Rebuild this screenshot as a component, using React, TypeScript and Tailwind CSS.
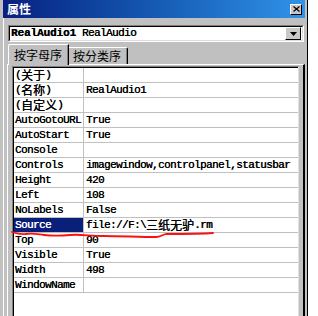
import React from 'react';

type Row = { name: React.ReactNode; value?: React.ReactNode; selected?: boolean };

const Cjk: React.FC<{ children: React.ReactNode }> = ({ children }) => (
  <span className="inline-block h-[12px] text-[12px] leading-[12px] tracking-normal font-['Noto_Sans_CJK_SC',sans-serif]">{children}</span>
);

const rows: Row[] = [
  { name: <>(<Cjk>关于</Cjk>)</> },
  { name: <>(<Cjk>名称</Cjk>)</>, value: 'RealAudio1' },
  { name: <>(<Cjk>自定义</Cjk>)</> },
  { name: 'AutoGotoURL', value: 'True' },
  { name: 'AutoStart', value: 'True' },
  { name: 'Console' },
  { name: 'Controls', value: 'imagewindow,controlpanel,statusbar' },
  { name: 'Height', value: '420' },
  { name: 'Left', value: '108' },
  { name: 'NoLabels', value: 'False' },
  { name: 'Source', value: <>file://F:\<Cjk>三纸无驴</Cjk>.rm</>, selected: true },
  { name: 'Top', value: '90' },
  { name: 'Visible', value: 'True' },
  { name: 'Width', value: '498' },
  { name: 'WindowName' },
];

const PropRow: React.FC<{ row: Row }> = ({ row }) => (
  <div className="flex h-[15px] border-b border-[#c0c0c0]">
    <div
      className={`w-[70px] shrink-0 border-r border-[#c0c0c0] pl-[1px] flex items-center whitespace-nowrap ${
        row.selected ? 'bg-[#0a1f7a] text-white [text-shadow:0.35px_0_0_#fff]' : 'text-black'
      }`}
    >
      {row.name}
    </div>
    <div className="flex-1 pl-[2px] flex items-center whitespace-nowrap text-black">{row.value}</div>
  </div>
);

export default function App() {
  return (
    <div className="relative w-[318px] h-[316px] bg-white overflow-hidden">
      <div className="flex flex-col w-[308px] h-[316px] bg-[#c0c0c0] pl-[3px] pr-[2px] border-r border-black">
        {/* title bar */}
        <div className="h-[18px] shrink-0 flex items-center justify-between pl-[4px] pr-[3px] bg-linear-to-r from-[#0a1f80] to-[#3193e8]">
          <span className="text-white font-bold text-[12px] leading-none font-['Noto_Sans_CJK_SC',sans-serif]">属性</span>
          <button className="w-[12px] h-[11px] bg-[#c8c8c8] border-t border-l border-white border-r border-b border-r-black border-b-black flex items-center justify-center p-0">
            <svg width="7" height="6" viewBox="0 0 7 6">
              <path d="M0.5 0.5 L6.5 5.5 M6.5 0.5 L0.5 5.5" stroke="#000" strokeWidth="1.2" />
            </svg>
          </button>
        </div>

        <div className="flex-1 flex flex-col border-l border-white">
          {/* object combo */}
          <div className="mt-[7px] ml-[4px] w-[296px] h-[17px] border-t border-l border-[#808080] border-r border-b border-r-white border-b-white">
            <div className="h-full flex items-center bg-white border-t border-l border-black border-r border-b border-r-[#dcdcdc] border-b-[#dcdcdc] pl-[1px] pr-[1px]">
              <span className="flex-1 whitespace-nowrap text-[11px] tracking-[-0.6px] text-black font-['Liberation_Mono',monospace] [text-shadow:0.35px_0_0_#000]">
                <b className="tracking-[-0.1px]">RealAudio1</b> RealAudio
              </span>
              <div className="w-[16px] h-[13px] bg-[#c8c8c8] border-t border-l border-white border-r border-b border-r-black border-b-black flex items-center justify-center">
                <svg width="7" height="4" viewBox="0 0 7 4">
                  <path d="M0 0 H7 L3.5 4 Z" fill="#000" />
                </svg>
              </div>
            </div>
          </div>

          {/* tabs */}
          <div className="mt-[2px] ml-[4px] h-[20px] flex items-end relative z-10">
            <div className="w-[61px] h-[21px] -mb-px bg-[#c0c0c0] border-t border-l border-white border-r border-r-black rounded-tl-[2px] shadow-[inset_-1px_0_#808080] flex items-center pl-[5px] text-[12px] text-black font-['Noto_Sans_CJK_SC',sans-serif]">
              按字母序
            </div>
            <div className="w-[59px] h-[17px] bg-[#c0c0c0] border-t border-white border-r border-r-black rounded-tr-[2px] shadow-[inset_-1px_0_#808080] flex items-center pl-[4px] text-[12px] text-black font-['Noto_Sans_CJK_SC',sans-serif]">
              按分类序
            </div>
          </div>

          {/* tab panel */}
          <div className="flex-1 flex flex-col ml-[3px] w-[298px] border-t border-l border-white border-r-2 border-r-black pl-[4px] pr-[4px] pt-[1px]">
            <div className="flex-1 flex flex-col border-t border-l border-[#808080] border-r border-r-[#e0e0e0]">
              <div className="flex-1 bg-white border-t border-l border-black text-[11px] tracking-[-0.6px] font-['Liberation_Mono','Noto_Sans_CJK_SC',monospace] leading-[12px] [text-shadow:0.35px_0_0_#000]">
                {rows.map((r, i) => (
                  <PropRow key={i} row={r} />
                ))}
              </div>
            </div>
          </div>
        </div>
      </div>

      {/* red hand-drawn underline */}
      <svg className="absolute left-0 top-0 pointer-events-none" width="318" height="316" viewBox="0 0 318 316">
        <path
          d="M12 232 C16 233 20 235 26 234 C32 233 36 234 44 235 C52 236 60 236 70 235 C80 234 90 236 104 236 C120 236 140 237 156 237 C160 237 162 235 166 234 C180 234 200 234 213 233"
          fill="none"
          stroke="#ff1010"
          strokeWidth="1.8"
          strokeLinecap="round"
        />
      </svg>
    </div>
  );
}
